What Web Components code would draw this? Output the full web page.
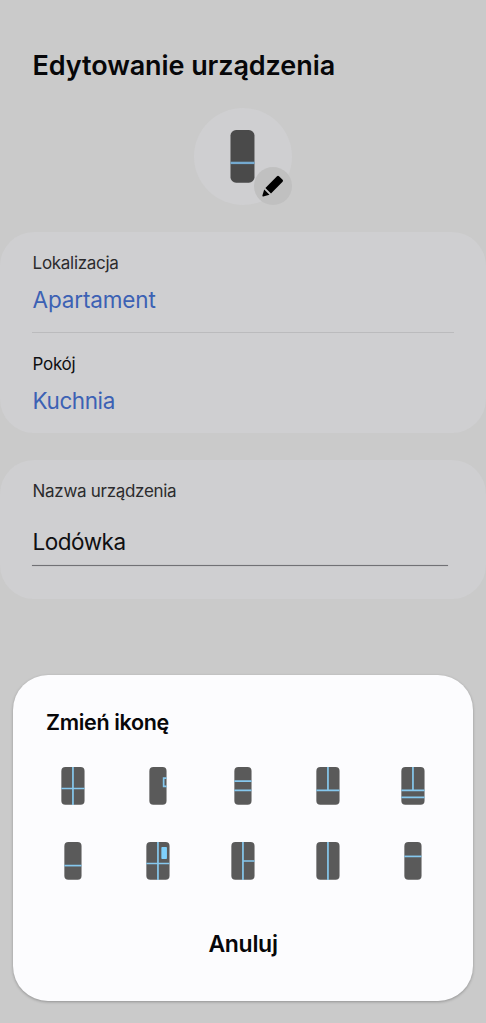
<!DOCTYPE html>
<html lang="pl">
<head>
<meta charset="utf-8">
<title>Edytowanie urządzenia</title>
<style>
html,body{margin:0;height:100%;background:#cacaca}
body{font-family:Inter,"Noto Sans",sans-serif;color:#070709;overflow:hidden}
</style>
</head>
<body>
<edit-page></edit-page>
<script>
const define = (name, html) => customElements.define(name, class extends HTMLElement {
  constructor() {
    super();
    const t = document.createElement('template');
    t.innerHTML = html;
    this.attachShadow({mode: 'open'}).append(t.content.cloneNode(true));
  }
});

/* Fridge glyph: body is 38 units high, lines give the door layout */
const FRIDGES = {
  cross: [23, '<path d="M11.6 0V38M0 21.5H23.2"/>'],
  handle: [17, '<path d="M17.2 11.2H14.3V19.4H17.2"/>'],
  triple: [17, '<path d="M0 14.2H17.2M0 23.3H17.2"/>'],
  french: [23, '<path d="M11.6 0V23.3M0 23.3H23.2"/>'],
  drawers: [23, '<path d="M11.6 0V23.3M0 23.3H23.2M0 30.4H23.2"/>'],
  bottom: [17, '<path d="M0 23.6H17.2"/>'],
  screen: [23, '<path d="M11.6 0V38M0 21.5H23.2"/><rect x="15" y="5" width="5.6" height="12" rx=".8" fill="#7fd0fb" stroke="none"/>'],
  side: [23, '<path d="M11.6 0V38M11.6 19H23.2"/>'],
  double: [23, '<path d="M11.6 0V38"/>'],
  top: [17, '<path d="M0 14.4H17.2"/>']
};
customElements.define('fridge-icon', class extends HTMLElement {
  connectedCallback() {
    const [w, lines] = FRIDGES[this.getAttribute('kind')];
    this.attachShadow({mode: 'open'}).innerHTML = `
      <style>:host{display:block;height:var(--icon-height,38px)}svg{display:block;height:100%}</style>
      <svg viewBox="-0.35 0 ${w + 1} 38" fill="none" stroke="var(--icon-line,#86c8ee)" stroke-width="1.7">
        <rect width="${w + .2}" height="37.8" rx="4" fill="var(--icon-body,#5a5a5a)" stroke="none"/>${lines}
      </svg>`;
  }
});

define('device-avatar', `
<style>
:host{display:block;position:relative;width:98px;height:97px;border-radius:50%;background:#cfcfd1;--icon-height:53px;--icon-body:#4a4a4a;--icon-line:#74a9cf}
.pic{display:flex;justify-content:center;padding-top:22px}
.badge{position:absolute;right:0;bottom:0;width:38px;height:38px;border-radius:50%;background:#c0c0c0}
svg{display:block}
</style>
<div class="pic"><fridge-icon kind="bottom"></fridge-icon></div>
<div class="badge"><svg width="38" height="38" viewBox="0 0 38 38"><path d="M23 9.2Q24 8.3 25 9.2L28.6 12.8Q29.5 13.8 28.6 14.8L17 26.5 11.4 21.1ZM10.2 22.5 15.5 27.7 9.2 29.5Q8.2 29.6 8.4 28.6Z" fill="#000"/></svg></div>`);

define('info-card', `
<style>
:host{display:block;box-sizing:border-box;padding:20px 32px 0;border-radius:34px;background:#cfcfd1}
</style><slot></slot>`);

define('info-field', `
<style>
:host{display:block;padding-left:.6px}
.label{font-size:17px;line-height:22px;color:var(--label-color,#2b2b2d);letter-spacing:var(--label-spacing,-.3px)}
.value{margin-top:var(--value-gap,11px);font-size:22.5px;line-height:30px;color:var(--value-color,#3c61b4);letter-spacing:var(--value-spacing,-.15px)}
</style>
<div class="label"><slot name="label"></slot></div>
<div class="value"><slot></slot></div>`);

define('icon-dialog', `
<style>
:host{display:flex;flex-direction:column;box-sizing:border-box;width:460px;height:326px;padding-top:33px;border-radius:35px;background:#fcfcfe;box-shadow:0 1px 3px rgba(0,0,0,.28)}
h2{margin:0 0 31px 33px;font-size:21.5px;line-height:28px;font-weight:600;letter-spacing:-.33px}
.grid{display:grid;grid-template-columns:repeat(5,85px);grid-auto-rows:38px;row-gap:37.3px;justify-items:center;margin-left:17.5px}
button{align-self:center;margin-top:48px;padding:0;border:0;background:none;color:inherit;font:600 23px/32px Inter,"Noto Sans",sans-serif;letter-spacing:-.3px}
</style>
<h2>Zmień ikonę</h2>
<div class="grid">
<fridge-icon kind="cross"></fridge-icon><fridge-icon kind="handle"></fridge-icon><fridge-icon kind="triple"></fridge-icon><fridge-icon kind="french"></fridge-icon><fridge-icon kind="drawers"></fridge-icon>
<fridge-icon kind="bottom"></fridge-icon><fridge-icon kind="screen"></fridge-icon><fridge-icon kind="side"></fridge-icon><fridge-icon kind="double"></fridge-icon><fridge-icon kind="top"></fridge-icon>
</div>
<button>Anuluj</button>`);

define('edit-page', `
<style>
:host{display:flex;flex-direction:column;box-sizing:border-box;width:486px;height:1023px;padding-top:48px}
h1{margin:0 0 24px 32.5px;font-size:27px;line-height:36px;font-weight:600;letter-spacing:-.08px}
device-avatar{align-self:center;margin-bottom:27px}
.place{height:201px}
.name{height:139px;margin-top:27px;--value-gap:25px;--value-color:#101012;--value-spacing:-.5px}
hr{height:1px;margin:17px 0 20px;border:0;background:#bbbbbd}
.line{height:1px;margin:8px 6px 0 0;background:#717175;box-shadow:0 0 1px #8b8b8f}
icon-dialog{align-self:center;margin-top:76px}
</style>
<h1>Edytowanie urządzenia</h1>
<device-avatar></device-avatar>
<info-card class="place">
<info-field><span slot="label">Lokalizacja</span>Apartament</info-field>
<hr>
<info-field style="--label-color:#101012;--value-spacing:-.42px"><span slot="label">Pokój</span>Kuchnia</info-field>
</info-card>
<info-card class="name">
<info-field><span slot="label">Nazwa urządzenia</span>Lodówka</info-field>
<div class="line"></div>
</info-card>
<icon-dialog></icon-dialog>`);
</script>
</body>
</html>
